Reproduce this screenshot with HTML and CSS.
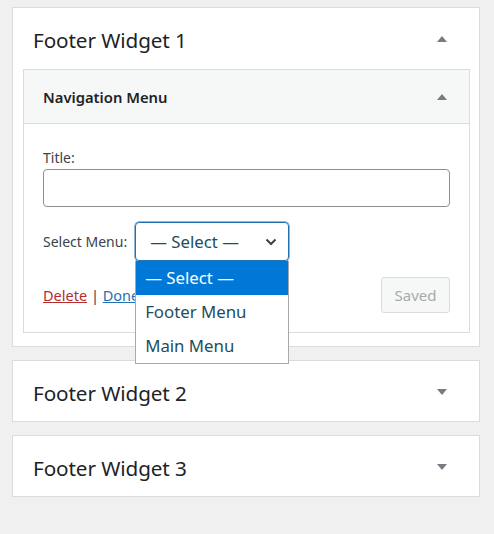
FILE: index.html
```html
<!DOCTYPE html>
<html>
<head>
<meta charset="utf-8">
<link rel="stylesheet" href="styles.css">
</head>
<body>
<div class="area">
  <div class="card">
    <div class="card-head">
      <span class="card-title">Footer Widget 1</span>
      <svg class="arrow" width="10" height="6" viewBox="0 0 10 6"><path d="M0 6 L5 0 L10 6 Z" fill="#787c82"/></svg>
    </div>
    <div class="card-body">
      <div class="widget">
        <div class="widget-head">
          <span class="widget-title">Navigation Menu</span>
          <svg class="arrow" width="10" height="6" viewBox="0 0 10 6"><path d="M0 6 L5 0 L10 6 Z" fill="#787c82"/></svg>
        </div>
        <div class="widget-body">
          <label class="label">Title:</label>
          <div class="input"></div>
          <div class="select-row">
            <span class="label">Select Menu:</span>
            <div class="select-wrap">
              <div class="select">
                <span>— Select —</span>
                <svg width="12" height="8" viewBox="0 0 12 8"><path d="M1.5 1.5 L6 6 L10.5 1.5" fill="none" stroke="#3c434a" stroke-width="2"/></svg>
              </div>
              <ul class="dropdown">
                <li class="active">— Select —</li>
                <li>Footer Menu</li>
                <li>Main Menu</li>
              </ul>
            </div>
          </div>
          <div class="actions">
            <div class="links"><a class="delete">Delete</a> | <a class="done">Done</a></div>
            <button class="saved">Saved</button>
          </div>
        </div>
      </div>
    </div>
  </div>
  <div class="card">
    <div class="card-head">
      <span class="card-title">Footer Widget 2</span>
      <svg class="arrow" width="10" height="6" viewBox="0 0 10 6"><path d="M0 0 L5 6 L10 0 Z" fill="#787c82"/></svg>
    </div>
  </div>
  <div class="card">
    <div class="card-head">
      <span class="card-title">Footer Widget 3</span>
      <svg class="arrow" width="10" height="6" viewBox="0 0 10 6"><path d="M0 0 L5 6 L10 0 Z" fill="#787c82"/></svg>
    </div>
  </div>
</div>
</body>
</html>
```
FILE: styles.css
```css
html, body {
  margin: 0;
  padding: 0;
  background: #f0f0f1;
  font-family: "Noto Sans", "Open Sans", sans-serif;
  color: #1d2327;
}
.area {
  padding: 7px 14px 0 12px;
  display: flex;
  flex-direction: column;
  gap: 13px;
}
.card {
  background: #fff;
  border: 1px solid #dcdcde;
}
.card-head {
  height: 60px;
  display: flex;
  align-items: center;
  justify-content: space-between;
  padding: 0 32px 0 20px;
}
.card-title {
  font-size: 20.7px;
  color: #1d2327;
  letter-spacing: -0.1px;
  padding-top: 4px;
}
.card-head .arrow {
  margin-top: 1px;
}
.card-body {
  padding: 1px 9px 13px 10px;
}
.widget {
  border: 1px solid #dcdcde;
  background: #fff;
}
.widget-head {
  height: 53px;
  background: #f6f7f7;
  border-bottom: 1px solid #dcdcde;
  display: flex;
  align-items: center;
  justify-content: space-between;
  padding: 0 22px 0 19px;
}
.widget-title {
  font-size: 14.8px;
  font-weight: 600;
  color: #1d2327;
}
.widget-body {
  padding: 25px 19px 19px 19px;
}
.label {
  font-size: 14px;
  line-height: 18px;
  color: #3c434a;
  display: block;
}
.input {
  margin-top: 2px;
  height: 36px;
  border: 1px solid #8c8f94;
  border-radius: 4px;
  background: #fff;
}
.select-row {
  margin-top: 15px;
  display: flex;
  align-items: center;
}
.select-row .label {
  margin-right: 8px;
}
.select-wrap {
  position: relative;
}
.select {
  width: 154px;
  height: 39px;
  box-sizing: border-box;
  border: 1px solid #2271b1;
  border-radius: 4px;
  display: flex;
  align-items: center;
  justify-content: space-between;
  padding: 0 11px 0 14px;
  font-size: 16.8px;
  color: #1e4e5c;
  box-shadow: 0 0 0 0.5px #2271b1;
}
.dropdown {
  position: absolute;
  left: 0;
  top: 39px;
  width: 154px;
  box-sizing: border-box;
  margin: 0;
  padding: 0;
  list-style: none;
  background: #fff;
  border: 1px solid #a7aaad;
  border-top: none;
  z-index: 5;
}
.dropdown li {
  height: 34px;
  line-height: 34px;
  padding-left: 9px;
  font-size: 16.8px;
  color: #1e4e5c;
}
.dropdown li.active {
  background: #0078d7;
  color: #fff;
}
.actions {
  margin-top: 16px;
  display: flex;
  justify-content: space-between;
  align-items: center;
}
.links {
  font-size: 14.5px;
  color: #3c434a;
}
.delete {
  color: #b32d2e;
  text-decoration: underline;
}
.done {
  color: #2271b1;
  text-decoration: underline;
}
.saved {
  width: 69px;
  height: 36px;
  background: #f6f7f7;
  border: 1px solid #dcdcde;
  border-radius: 3px;
  color: #a7aaad;
  font-family: inherit;
  font-size: 15px;
}
```
